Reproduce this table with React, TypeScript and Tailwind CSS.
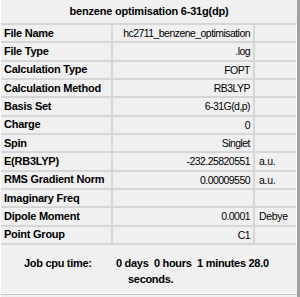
import React from "react";

const rows: { label: string; value: string; unit?: string }[] = [
  { label: "File Name", value: "hc2711_benzene_optimisation" },
  { label: "File Type", value: ".log" },
  { label: "Calculation Type", value: "FOPT" },
  { label: "Calculation Method", value: "RB3LYP" },
  { label: "Basis Set", value: "6-31G(d,p)" },
  { label: "Charge", value: "0" },
  { label: "Spin", value: "Singlet" },
  { label: "E(RB3LYP)", value: "-232.25820551", unit: "a.u." },
  { label: "RMS Gradient Norm", value: "0.00009550", unit: "a.u." },
  { label: "Imaginary Freq", value: "" },
  { label: "Dipole Moment", value: "0.0001", unit: "Debye" },
  { label: "Point Group", value: "C1" },
];

const App: React.FC = () => {
  return (
    <div className="w-[300px] h-[297px] bg-[#f0f0f0] text-black font-['Liberation_Sans',Arial,sans-serif] text-[11px] leading-none overflow-hidden border-l border-l-white border-r-[3px] border-r-[#a0a0a0] flex flex-col">
      <div className="h-[23px] flex items-center justify-center font-bold tracking-[-0.2px]">
        benzene optimisation 6-31g(dp)
      </div>

      <div className="border-t-2 border-[#d6d6d6] border-r border-r-white">
        {rows.map((row) => (
          <div
            key={row.label}
            className="grid grid-cols-[112px_142px_1fr] h-[18.33px] border-b-2 border-[#d6d6d6]"
          >
            <div className="flex items-center pl-[3px] font-bold tracking-[-0.25px] border-r-2 border-[#d6d6d6] whitespace-nowrap">
              {row.label}
            </div>
            <div className="flex items-center justify-end pr-[3px] text-[10.5px] tracking-[-0.55px] border-r-2 border-[#d6d6d6] whitespace-nowrap">
              {row.value}
            </div>
            <div className="flex items-center pl-[4px] text-[10.5px] tracking-[-0.3px] whitespace-nowrap">
              {row.unit}
            </div>
          </div>
        ))}
      </div>

      <div className="flex-1 flex font-bold tracking-[-0.3px] pt-[13px]">
        <div className="w-[115px] pl-[23px] whitespace-nowrap">Job cpu time:</div>
        <div className="flex flex-col gap-[5px] whitespace-pre">
          <span>0 days  0 hours  1 minutes 28.0</span>
          <span className="pl-[12px]">seconds.</span>
        </div>
      </div>
      <div className="h-[4px] border-t border-t-white">
        <div className="h-px bg-[#c0c0c0]" />
      </div>
    </div>
  );
};

export default App;
